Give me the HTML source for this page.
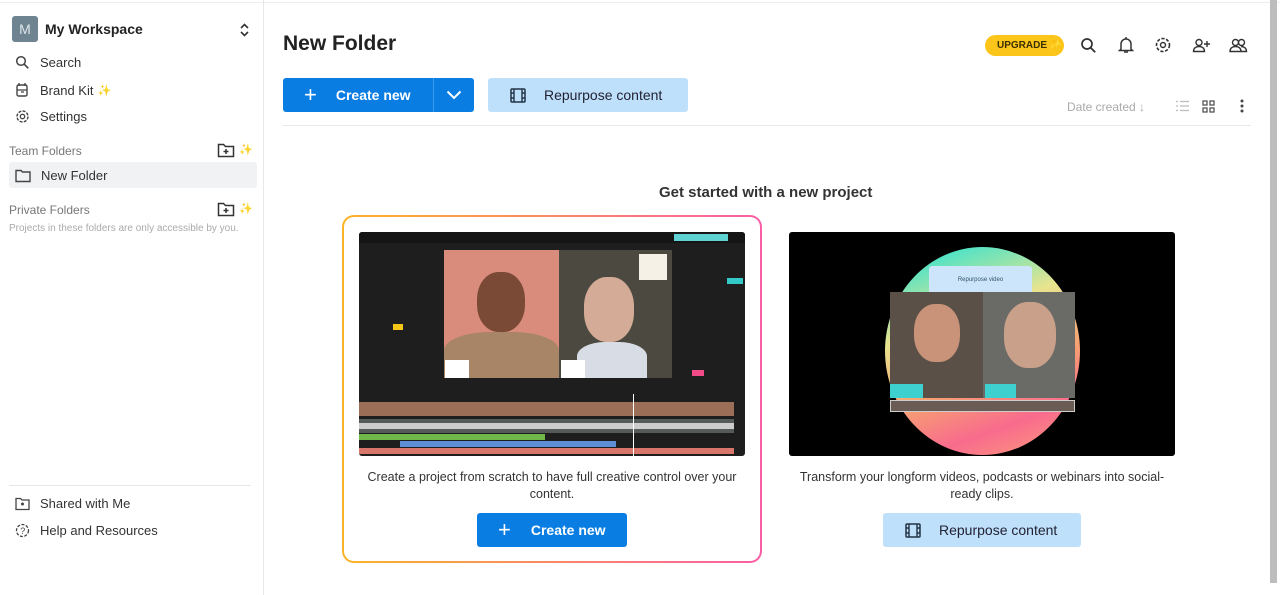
<!DOCTYPE html>
<html><head><meta charset="utf-8"><style>
*{box-sizing:border-box;margin:0;padding:0}
body{width:1280px;height:595px;overflow:hidden;background:#fff;font-family:"Liberation Sans",sans-serif;color:#222;position:relative}
.abs{position:absolute}
.side{left:0;top:0;width:264px;height:595px;border-right:1px solid #e8e8e8}
.nav{font-size:13px;color:#333;display:flex;align-items:center}
.nav svg{margin-right:10px}
.lab{font-size:12px;color:#777}
.btn{position:absolute;border-radius:3px;display:flex;align-items:center;font-size:14px;font-weight:bold}
.ico{position:absolute}
</style></head><body>
<div class="abs" style="left:0;top:0;width:1280px;height:3px;border-bottom:1px solid #eee"></div>
<div class="abs side">
 <div class="abs" style="left:12px;top:16px;width:26px;height:26px;background:#6e8591;border-radius:3px;color:#dfe6ea;font-size:14px;text-align:center;line-height:26px">M</div>
 <div class="abs" style="left:45px;top:21px;font-size:14px;font-weight:bold;color:#222">My Workspace</div>
 <svg class="ico" style="left:239px;top:23px" width="11" height="14" viewBox="0 0 11 14"><path d="M2 5l3.5-3.5L9 5M2 9l3.5 3.5L9 9" fill="none" stroke="#333" stroke-width="1.6"/></svg>
 <div class="abs nav" style="left:15px;top:55px"><svg width="15" height="15" viewBox="0 0 15 15"><circle cx="6" cy="6" r="4.3" fill="none" stroke="#444" stroke-width="1.5"/><path d="M9.3 9.3l4 4" stroke="#444" stroke-width="1.6"/></svg>Search</div>
 <div class="abs nav" style="left:15px;top:82px"><svg width="15" height="16" viewBox="0 0 15 16"><rect x="2" y="3" width="10" height="11" rx="1.5" fill="none" stroke="#444" stroke-width="1.4"/><path d="M4 1v3M10 1v3M2 8h10M6 10h3" stroke="#444" stroke-width="1.3"/></svg>Brand Kit <span style="color:#f5c518;margin-left:4px;font-size:11px">✨</span></div>
 <div class="abs nav" style="left:15px;top:109px"><svg width="15" height="15" viewBox="0 0 15 15"><circle cx="7.5" cy="7.5" r="5.5" fill="none" stroke="#444" stroke-width="1.4" stroke-dasharray="3 1.3"/><circle cx="7.5" cy="7.5" r="2.2" fill="none" stroke="#444" stroke-width="1.3"/></svg>Settings</div>
 <div class="abs lab" style="left:9px;top:144px">Team Folders</div>
 <svg class="ico" style="left:217px;top:142px" width="18" height="16" viewBox="0 0 18 16"><path d="M1.5 2.5h5l2 2h8v10h-15z" fill="none" stroke="#333" stroke-width="1.5"/><path d="M9 7v5M6.5 9.5h5" stroke="#333" stroke-width="1.5"/></svg>
 <span class="abs" style="left:239px;top:143px;font-size:11px;color:#f5c518">✨</span>
 <div class="abs" style="left:9px;top:162px;width:248px;height:26px;background:#f1f2f4;border-radius:3px"></div>
 <div class="abs nav" style="left:15px;top:168px"><svg width="16" height="14" viewBox="0 0 16 14"><path d="M1 1.5h5l1.5 1.5h7.5v9.5h-14z" fill="none" stroke="#444" stroke-width="1.4"/></svg>New Folder</div>
 <div class="abs lab" style="left:9px;top:203px">Private Folders</div>
 <svg class="ico" style="left:217px;top:201px" width="18" height="16" viewBox="0 0 18 16"><path d="M1.5 2.5h5l2 2h8v10h-15z" fill="none" stroke="#333" stroke-width="1.5"/><path d="M9 7v5M6.5 9.5h5" stroke="#333" stroke-width="1.5"/></svg>
 <span class="abs" style="left:239px;top:202px;font-size:11px;color:#f5c518">✨</span>
 <div class="abs" style="left:9px;top:223px;font-size:10px;color:#aaa">Projects in these folders are only accessible by you.</div>
 <div class="abs" style="left:9px;top:485px;width:242px;border-top:1px solid #e6e6e6"></div>
 <div class="abs nav" style="left:15px;top:496px"><svg width="15" height="14" viewBox="0 0 15 14"><path d="M1 1.5h4.5l1.5 1.5h7v9.5h-13z" fill="none" stroke="#444" stroke-width="1.3"/><circle cx="7.5" cy="7" r="1.5" fill="#444"/></svg>Shared with Me</div>
 <div class="abs nav" style="left:15px;top:523px"><svg width="15" height="15" viewBox="0 0 15 15"><circle cx="7.5" cy="7.5" r="6" fill="none" stroke="#444" stroke-width="1.3" stroke-dasharray="3 1.5"/><text x="5.3" y="11" font-size="9" fill="#444" font-family="Liberation Sans">?</text></svg>Help and Resources</div>
</div>
<div class="abs" style="left:283px;top:32px;font-size:21px;font-weight:bold;color:#222">New Folder</div>
<div class="abs" style="left:985px;top:35px;width:79px;height:21px;background:#fcc51a;border-radius:11px;font-size:10px;font-weight:bold;color:#3a3000;line-height:21px;padding-left:12px">UPGRADE <span style="color:#fff">✨</span></div>
<svg class="ico" style="left:1080px;top:37px" width="17" height="17" viewBox="0 0 17 17"><circle cx="7" cy="7" r="5" fill="none" stroke="#333" stroke-width="1.7"/><path d="M10.7 10.7l4.5 4.5" stroke="#333" stroke-width="1.8"/></svg>
<svg class="ico" style="left:1118px;top:36px" width="16" height="18" viewBox="0 0 16 18"><path d="M3 13V8a5 5 0 0110 0v5l1.5 1.5h-13z" fill="none" stroke="#333" stroke-width="1.5"/><path d="M6 16h4M8 1v2" stroke="#333" stroke-width="1.5"/></svg>
<svg class="ico" style="left:1154px;top:36px" width="18" height="18" viewBox="0 0 18 18"><circle cx="9" cy="9" r="6.5" fill="none" stroke="#333" stroke-width="1.6" stroke-dasharray="3.2 1.6"/><circle cx="9" cy="9" r="2.5" fill="none" stroke="#333" stroke-width="1.4"/></svg>
<svg class="ico" style="left:1192px;top:38px" width="19" height="15" viewBox="0 0 19 15"><circle cx="7" cy="4.5" r="3" fill="none" stroke="#333" stroke-width="1.4"/><path d="M1.5 13.5c0-3.5 2.5-5 5.5-5s5.5 1.5 5.5 5z" fill="none" stroke="#333" stroke-width="1.4"/><path d="M15 3v6M12 6h6" stroke="#333" stroke-width="1.4"/></svg>
<svg class="ico" style="left:1229px;top:38px" width="19" height="15" viewBox="0 0 19 15"><circle cx="6.5" cy="4.5" r="3" fill="none" stroke="#333" stroke-width="1.4"/><circle cx="12.5" cy="4.5" r="3" fill="none" stroke="#333" stroke-width="1.4"/><path d="M1 13.5c0-3.5 2.5-5 5.5-5s5.5 1.5 5.5 5zM12 8.5c3 0 5.5 1.5 5.5 5h-5" fill="none" stroke="#333" stroke-width="1.4"/></svg>
<div class="btn" style="left:283px;top:78px;width:191px;height:34px;background:#0a7de3;color:#fff">
 <span style="font-size:22px;font-weight:normal;margin-left:21px;margin-right:19px">+</span>Create new
 <div class="abs" style="left:150px;top:0;width:1px;height:34px;background:#3b98ea"></div>
 <svg class="ico" style="left:163px;top:12px" width="16" height="10" viewBox="0 0 16 10"><path d="M1.5 1.5l6.5 6.5 6.5-6.5" fill="none" stroke="#fff" stroke-width="2"/></svg>
</div>
<div class="btn" style="left:488px;top:78px;width:200px;height:34px;background:#bfe0fb;color:#224">
 <svg style="margin-left:22px;margin-right:18px" width="16" height="15" viewBox="0 0 16 15"><rect x="1" y="1" width="14" height="13" rx="1" fill="none" stroke="#234" stroke-width="1.5"/><path d="M4 1v13M12 1v13M1 5h3M1 10h3M12 5h3M12 10h3" stroke="#234" stroke-width="1.4"/></svg><span style="font-weight:normal;color:#223">Repurpose content</span>
</div>
<div class="abs" style="left:1067px;top:100px;font-size:12px;color:#aaa">Date created ↓</div>
<svg class="ico" style="left:1176px;top:100px" width="13" height="12" viewBox="0 0 13 12"><path d="M0 1.5h2M4 1.5h9M0 6h2M4 6h9M0 10.5h2M4 10.5h9" stroke="#bbb" stroke-width="1.2"/></svg>
<svg class="ico" style="left:1202px;top:100px" width="13" height="13" viewBox="0 0 13 13"><rect x="1" y="1" width="4" height="4" fill="none" stroke="#555" stroke-width="1.3"/><rect x="8" y="1" width="4" height="4" fill="none" stroke="#555" stroke-width="1.3"/><rect x="1" y="8" width="4" height="4" fill="none" stroke="#555" stroke-width="1.3"/><rect x="8" y="8" width="4" height="4" fill="none" stroke="#555" stroke-width="1.3"/></svg>
<svg class="ico" style="left:1239px;top:99px" width="6" height="14" viewBox="0 0 6 14"><circle cx="3" cy="2" r="1.5" fill="#444"/><circle cx="3" cy="7" r="1.5" fill="#444"/><circle cx="3" cy="12" r="1.5" fill="#444"/></svg>
<div class="abs" style="left:283px;top:125px;width:968px;border-top:1px solid #e8e8e8"></div>
<div class="abs" style="left:1270px;top:0;width:7px;height:583px;background:#bdbdbd"></div>
<div class="abs" style="left:659px;top:184px;font-size:15px;font-weight:bold;color:#333">Get started with a new project</div>
<div class="abs" style="left:342px;top:215px;width:420px;height:348px;border-radius:12px;padding:2px;background:linear-gradient(90deg,#fbb427,#fa5da6)"><div style="width:100%;height:100%;background:#fff;border-radius:10px"></div></div>
<div class="abs" style="left:359px;top:232px;width:386px;height:224px;background:#1e1e1e;border-radius:3px;overflow:hidden">
 <div class="abs" style="left:0;top:0;width:386px;height:11px;background:#151515"></div>
 <div class="abs" style="left:315px;top:2px;width:54px;height:7px;background:#5fd3d3"></div>
 <div class="abs" style="left:85px;top:18px;width:115px;height:128px;background:#d98c7b"></div>
 <div class="abs" style="left:118px;top:40px;width:48px;height:60px;background:#7a4a36;border-radius:45%"></div>
 <div class="abs" style="left:85px;top:100px;width:115px;height:46px;background:#a88567;border-radius:40% 40% 0 0"></div>
 <div class="abs" style="left:200px;top:18px;width:113px;height:128px;background:#4c4a40"></div>
 <div class="abs" style="left:225px;top:45px;width:50px;height:65px;background:#d4ab96;border-radius:45%"></div>
 <div class="abs" style="left:218px;top:110px;width:70px;height:36px;background:#d8dde5;border-radius:40% 40% 0 0"></div>
 <div class="abs" style="left:280px;top:22px;width:28px;height:26px;background:#f6f1e6"></div>
 <div class="abs" style="left:86px;top:128px;width:24px;height:18px;background:#fff"></div>
 <div class="abs" style="left:202px;top:128px;width:24px;height:18px;background:#fff"></div>
 <div class="abs" style="left:34px;top:92px;width:10px;height:6px;background:#f5c518"></div>
 <div class="abs" style="left:368px;top:46px;width:16px;height:6px;background:#33c9c6"></div>
 <div class="abs" style="left:333px;top:138px;width:12px;height:6px;background:#f04a87"></div>
 <div class="abs" style="left:0;top:170px;width:375px;height:14px;background:#9b6f57"></div>
 <div class="abs" style="left:0;top:187px;width:375px;height:14px;background:#555b58"></div>
 <div class="abs" style="left:0;top:191px;width:375px;height:6px;background:#ccc"></div>
 <div class="abs" style="left:0;top:202px;width:186px;height:6px;background:#6fb84a"></div>
 <div class="abs" style="left:41px;top:209px;width:216px;height:6px;background:#5e8ed6"></div>
 <div class="abs" style="left:0;top:216px;width:375px;height:6px;background:#d9766c"></div>
 <div class="abs" style="left:274px;top:162px;width:1px;height:62px;background:#fff"></div>
</div>
<div class="abs" style="left:789px;top:232px;width:386px;height:224px;background:#000;border-radius:3px;overflow:hidden">
 <div class="abs" style="left:96px;top:15px;width:195px;height:208px;border-radius:50%;background:linear-gradient(160deg,#4fe3c6 10%,#e7e48f 35%,#f6a171 60%,#f86b8d 80%,#ffa07a)"></div>
 <div class="abs" style="left:140px;top:34px;width:103px;height:28px;background:#cde5fb;border-radius:3px;font-size:6px;color:#356;text-align:center;line-height:28px">Repurpose video</div>
 <div class="abs" style="left:101px;top:60px;width:93px;height:106px;background:#5a5048"></div>
 <div class="abs" style="left:125px;top:72px;width:46px;height:58px;background:#c89378;border-radius:45%"></div>
 <div class="abs" style="left:194px;top:60px;width:92px;height:106px;background:#6a6a66"></div>
 <div class="abs" style="left:215px;top:70px;width:52px;height:66px;background:#c9a08a;border-radius:45%"></div>
 <div class="abs" style="left:101px;top:152px;width:33px;height:14px;background:#3ed0cf"></div>
 <div class="abs" style="left:196px;top:152px;width:31px;height:14px;background:#3ed0cf"></div>
 <div class="abs" style="left:101px;top:168px;width:185px;height:12px;background:#6a5c54;border:1px solid #ccc"></div>
</div>
<div class="abs" style="left:342px;top:469px;width:420px;text-align:center;font-size:12.5px;color:#333;line-height:17px;padding:0 16px">Create a project from scratch to have full creative control over your content.</div>
<div class="btn" style="left:477px;top:513px;width:150px;height:34px;background:#0a7de3;color:#fff"><span style="font-size:22px;font-weight:normal;margin-left:21px;margin-right:20px">+</span>Create new</div>
<div class="abs" style="left:782px;top:469px;width:400px;text-align:center;font-size:12.5px;color:#333;line-height:17px;padding:0 8px">Transform your longform videos, podcasts or webinars into social-ready clips.</div>
<div class="btn" style="left:883px;top:513px;width:198px;height:34px;background:#bfe0fb;color:#224">
 <svg style="margin-left:22px;margin-right:18px" width="16" height="15" viewBox="0 0 16 15"><rect x="1" y="1" width="14" height="13" rx="1" fill="none" stroke="#234" stroke-width="1.5"/><path d="M4 1v13M12 1v13M1 5h3M1 10h3M12 5h3M12 10h3" stroke="#234" stroke-width="1.4"/></svg><span style="font-weight:normal;color:#223">Repurpose content</span>
</div>
</body></html>
